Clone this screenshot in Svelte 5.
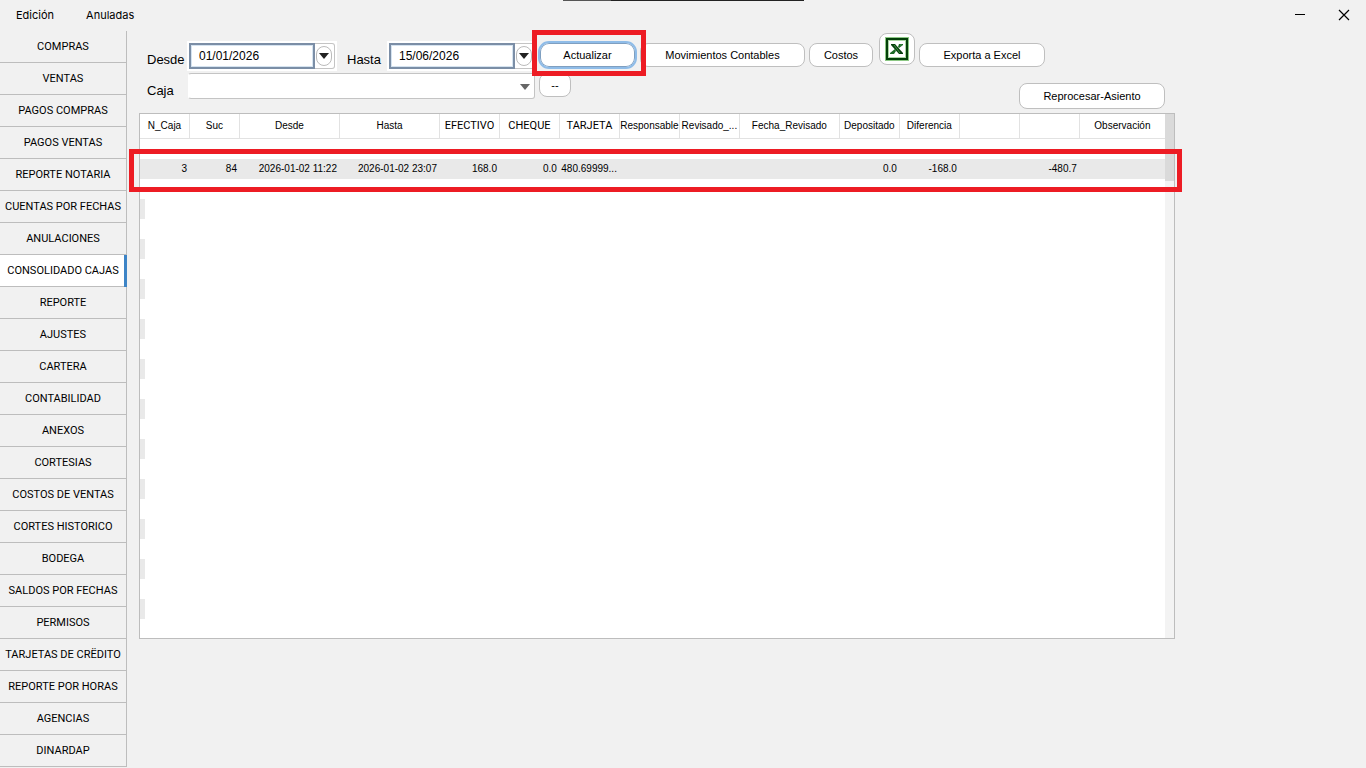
<script>
  const sections = [
    'COMPRAS',
    'VENTAS',
    'PAGOS COMPRAS',
    'PAGOS VENTAS',
    'REPORTE NOTARIA',
    'CUENTAS POR FECHAS',
    'ANULACIONES',
    'CONSOLIDADO CAJAS',
    'REPORTE',
    'AJUSTES',
    'CARTERA',
    'CONTABILIDAD',
    'ANEXOS',
    'CORTESIAS',
    'COSTOS DE VENTAS',
    'CORTES HISTORICO',
    'BODEGA',
    'SALDOS POR FECHAS',
    'PERMISOS',
    'TARJETAS DE CRËDITO',
    'REPORTE POR HORAS',
    'AGENCIAS',
    'DINARDAP'
  ];

  const columns = [
    { label: 'N_Caja', width: 50 },
    { label: 'Suc', width: 50 },
    { label: 'Desde', width: 100 },
    { label: 'Hasta', width: 100 },
    { label: 'EFECTIVO', width: 60, wide: true },
    { label: 'CHEQUE', width: 60, wide: true },
    { label: 'TARJETA', width: 60, wide: true },
    { label: 'Responsable', width: 60 },
    { label: 'Revisado_...', width: 60 },
    { label: 'Fecha_Revisado', width: 100 },
    { label: 'Depositado', width: 60 },
    { label: 'Diferencia', width: 60 },
    { label: '', width: 60 },
    { label: '', width: 60 },
    { label: 'Observación', width: 85 }
  ];

  const record = [
    '3', '84', '2026-01-02 11:22', '2026-01-02 23:07', '168.0', '0.0', '480.69999...',
    '', '', '', '0.0', '-168.0', '', '-480.7', ''
  ];

  // the grid always shows 24 lines, the record sits on the second one
  const lines = Array.from({ length: 24 }, (_, i) => (i === 1 ? record : null));
  const total = columns.reduce((sum, c) => sum + c.width, 0);

  let active = $state('CONSOLIDADO CAJAS');
  let from = $state('01/01/2026');
  let to = $state('15/06/2026');
  let box = $state('');
</script>

{#snippet calendarButton(id)}
  <button class="drop" type="button" aria-label="Abrir calendario {id}">
    <svg width="10" height="6" viewBox="0 0 10 6"><path d="M0 0h10L5 6z" fill="#222" /></svg>
  </button>
{/snippet}

<div class="window">
  <header class="titlebar">
    <nav class="menu">
      <button type="button">Edición</button>
      <button type="button">Anuladas</button>
    </nav>
    <div class="notch"></div>
    <div class="controls">
      <button type="button" aria-label="Minimizar">
        <svg width="12" height="12" viewBox="0 0 12 12"><path d="M1 5.5h10" stroke="#000" /></svg>
      </button>
      <button type="button" aria-label="Cerrar">
        <svg width="12" height="12" viewBox="0 0 12 12"><path d="M1 1l10 10M11 1L1 11" stroke="#000" stroke-width="1.2" /></svg>
      </button>
    </div>
  </header>

  <div class="body">
    <nav class="sidebar">
      {#each sections as s}
        <button type="button" class:active={s === active} onclick={() => (active = s)}>{s}</button>
      {/each}
    </nav>

    <main>
      <div class="row">
        <label class="caption" for="desde">Desde</label>
        <div class="date">
          <input id="desde" type="text" bind:value={from} />
          {@render calendarButton('desde')}
        </div>
        <label class="caption second" for="hasta">Hasta</label>
        <div class="date">
          <input id="hasta" type="text" bind:value={to} />
          {@render calendarButton('hasta')}
        </div>
        <div class="marked">
          <button type="button" class="btn focus">Actualizar</button>
        </div>
        <div class="actions">
          <button type="button" class="btn mov">Movimientos Contables</button>
          <button type="button" class="btn costs">Costos</button>
          <button type="button" class="btn excel" aria-label="Excel">
            <svg width="24" height="24" viewBox="0 0 24 24">
              <rect width="24" height="24" fill="#8cc884" />
              <rect x="1" y="1" width="22" height="22" fill="#04400a" />
              <rect x="3" y="3" width="18" height="18" fill="#a9d6a2" />
              <rect x="4" y="4" width="16" height="16" fill="#fff" />
              <path d="M6 7h4l8 9v1h-4L6 8z" fill="#06400c" />
              <path d="M14 7h4v1l-4 3-1-1zM10 12l1 2-2 3H5v-1z" fill="#1c6b26" />
              <path d="M9 8l6 8M15 8h2" stroke="#3f9344" />
            </svg>
          </button>
          <button type="button" class="btn export">Exporta a Excel</button>
        </div>
      </div>

      <div class="row bottom">
        <label class="caption" for="caja">Caja</label>
        <div class="combo">
          <select id="caja" bind:value={box}>
            <option value=""></option>
          </select>
          <svg width="10" height="6" viewBox="0 0 10 6"><path d="M0 0h10L5 6z" fill="#666" /></svg>
        </div>
        <button type="button" class="btn dashes">--</button>
        <button type="button" class="btn reprocess">Reprocesar-Asiento</button>
      </div>

      <div class="grid">
        <table>
          <colgroup>
            {#each columns as c}
              <col style="width:{(c.width / total) * 100}%" />
            {/each}
          </colgroup>
          <thead>
            <tr>
              {#each columns as c}
                <th class:wide={c.wide}>{c.label}</th>
              {/each}
            </tr>
          </thead>
          <tbody>
            {#each lines as line}
              <tr class:filled={line}>
                {#each columns as _, i}
                  <td>{line ? line[i] : ''}</td>
                {/each}
              </tr>
            {/each}
          </tbody>
        </table>
        <div class="scroll"><div class="thumb"></div></div>
        <div class="frame"></div>
      </div>
    </main>
  </div>
</div>

<style>
  :global(body) {
    margin: 0;
    background: #f1f1f1;
  }

  .window {
    min-height: 100vh;
    background: #f1f1f1;
    color: #000;
    font-family: 'Liberation Sans', Arial, sans-serif;
    font-size: 11px;
  }

  button,
  input,
  select {
    box-sizing: border-box;
    margin: 0;
    padding: 0;
    border: 0;
    background: none;
    color: inherit;
    font: inherit;
    outline: none;
  }

  /* Title bar */
  .titlebar {
    position: relative;
    display: flex;
    align-items: flex-start;
    justify-content: space-between;
    height: 31px;
  }

  .menu {
    display: flex;
    gap: 32px;
    height: 29px;
    padding-left: 16px;
    font-family: Inter, sans-serif;
    font-size: 11px;
  }

  .notch {
    position: absolute;
    top: 0;
    left: 50%;
    width: 241px;
    height: 1px;
    margin-left: -120px;
    background: linear-gradient(to right, #555 20%, #222 20%);
  }

  .controls {
    display: flex;
    gap: 32px;
    height: 30px;
    padding-right: 16px;
  }

  .controls svg {
    display: block;
  }

  /* Sidebar */
  .body {
    display: flex;
    align-items: flex-start;
  }

  .sidebar {
    display: flex;
    flex: none;
    flex-direction: column;
    box-sizing: border-box;
    width: 127px;
    border-right: 1px solid #bdbdbd;
    font-family: Roboto, sans-serif;
  }

  .sidebar button {
    height: 32px;
    border-bottom: 1px solid #bdbdbd;
    white-space: nowrap;
  }

  .sidebar .active {
    position: relative;
    background: #fff;
  }

  .sidebar .active::after {
    content: '';
    position: absolute;
    top: 0;
    right: -1px;
    bottom: -1px;
    width: 3px;
    background: #3d84c6;
  }

  /* Filters and actions */
  main {
    flex: 1;
    min-width: 0;
    max-width: 1036px;
    padding: 2px 12px 0;
  }

  .row {
    display: flex;
    align-items: flex-start;
    height: 40px;
    padding-left: 8px;
  }

  .caption {
    flex: none;
    width: 40px;
    padding-top: 19px;
    font-size: 13px;
    line-height: 16px;
  }

  .bottom .caption {
    width: 41px;
    padding-top: 10px;
  }

  .second {
    margin-left: 10px;
  }

  .date {
    display: flex;
    flex: none;
    box-sizing: border-box;
    width: 150px;
    height: 30px;
    margin-top: 8px;
    padding: 2px;
    background: #fff;
  }

  .date input {
    width: 126px;
    height: 26px;
    padding-left: 8px;
    border: 2px solid #7b8ea6;
    box-shadow: inset 0 0 0 1px #d5e3f0;
    font-size: 12px;
  }

  .drop {
    display: flex;
    flex: 1;
    align-items: center;
    justify-content: center;
    position: relative;
    padding-right: 2px;
    border: 1px solid #c4c4c4;
    border-left: 0;
    border-radius: 0 3px 3px 0;
  }

  .drop::before {
    content: '';
    position: absolute;
    top: 2px;
    left: 1px;
    box-sizing: border-box;
    width: 16px;
    height: 20px;
    border: 1px solid #bbb;
    border-radius: 8px;
  }

  .btn {
    flex: none;
    height: 24px;
    border: 1px solid #bfbfbf;
    border-radius: 8px;
    background: #fff;
    white-space: nowrap;
  }

  .marked {
    position: relative;
    z-index: 1;
    flex: none;
    margin: 8px 3px 0 1px;
  }

  .marked::after {
    content: '';
    position: absolute;
    inset: -11px -9px -7px -6px;
    border: 5px solid #ed1c24;
    pointer-events: none;
  }

  .focus {
    display: block;
    width: 99px;
    height: 28px;
    border: 2px solid #8fbce8;
    border-radius: 11px;
    box-shadow: inset 0 0 0 1px #7f9fc0;
  }

  .actions {
    display: flex;
    flex: none;
    align-items: flex-start;
    gap: 4px;
  }

  .mov,
  .costs,
  .export {
    margin-top: 10px;
  }

  .mov {
    width: 165px;
  }

  .costs {
    width: 64px;
  }

  .excel {
    display: flex;
    align-items: center;
    justify-content: center;
    width: 36px;
    height: 32px;
    margin-left: 2px;
  }

  .export {
    width: 126px;
  }

  .combo {
    position: relative;
    flex: none;
    width: 347px;
  }

  .combo select {
    display: block;
    width: 100%;
    height: 26px;
    border: 1px solid #c4c4c4;
    border-left-color: #fff;
    border-radius: 3px;
    background: #fff;
    appearance: none;
  }

  .combo svg {
    position: absolute;
    top: 11px;
    right: 5px;
    pointer-events: none;
  }

  .dashes {
    width: 32px;
    margin-left: 4px;
  }

  .reprocess {
    width: 146px;
    height: 26px;
    margin: 10px 10px 0 auto;
  }

  /* Records */
  .grid {
    position: relative;
    padding: 0 9px 19px 0;
    border: 1px solid #bdbdbd;
    background: #fff;
  }

  table {
    width: 100%;
    table-layout: fixed;
    border-spacing: 0;
    font-size: 10px;
    line-height: 16px;
  }

  th,
  td {
    box-sizing: border-box;
    padding: 0 3px 0 0;
    overflow: hidden;
    white-space: nowrap;
  }

  th {
    height: 25px;
    padding: 0;
    border-right: 1px solid #e2e2e2;
    border-bottom: 1px solid #e2e2e2;
    font-weight: normal;
    text-align: center;
  }

  th:last-child {
    border-right: 0;
  }

  .wide {
    font-family: Roboto, sans-serif;
    font-size: 11px;
  }

  td {
    height: 20px;
    text-align: right;
  }

  tbody tr:nth-child(even) td:first-child {
    background: linear-gradient(#e9e9e9, #e9e9e9) no-repeat 0 0 / 5px 100%;
  }

  tbody tr.filled td,
  tbody tr.filled td:first-child {
    background: #e9e9e9;
  }

  .scroll {
    position: absolute;
    top: 0;
    right: 0;
    bottom: 0;
    width: 9px;
    background: #f3f3f3;
  }

  .thumb {
    height: 67px;
    background: #dadada;
  }

  .frame {
    position: absolute;
    top: 35px;
    right: -8px;
    left: -11px;
    box-sizing: border-box;
    height: 43px;
    border: 5px solid #ed1c24;
    pointer-events: none;
  }
</style>
